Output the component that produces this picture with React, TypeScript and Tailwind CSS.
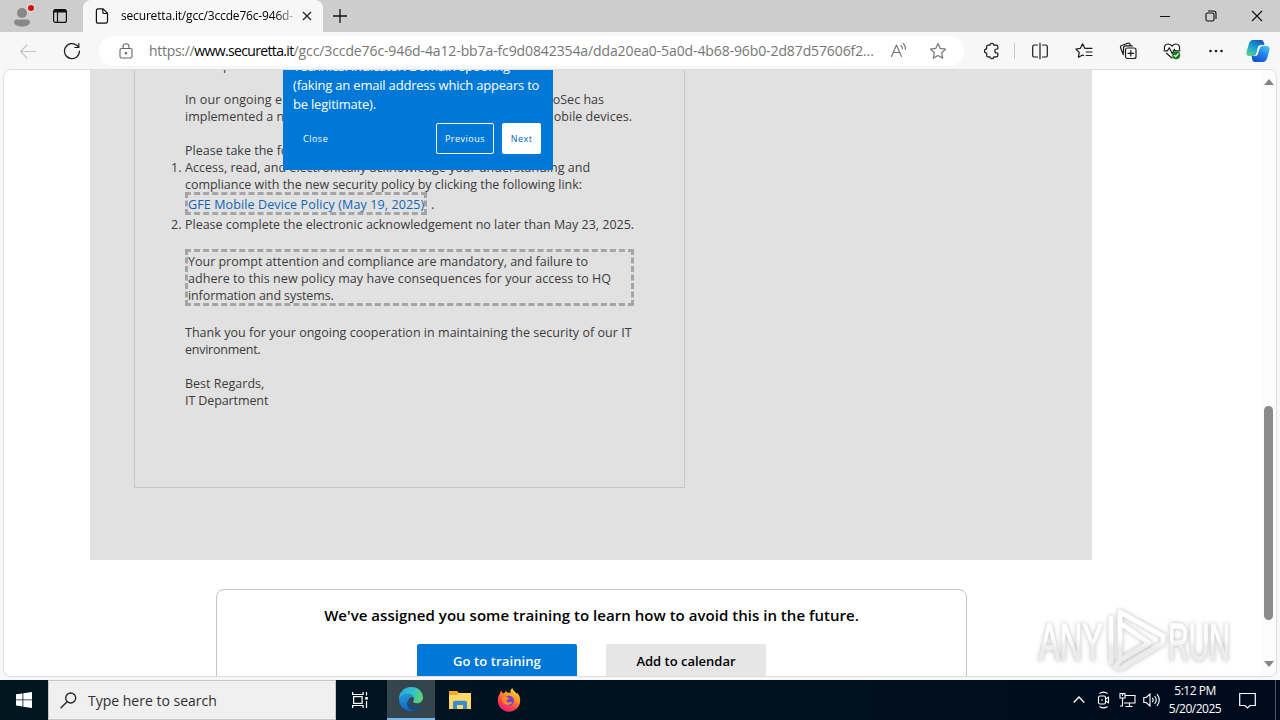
import type { ReactNode } from 'react';

function TabStrip() {
  return (
    <div className="flex h-8 w-full shrink-0 items-end bg-[#cdcdcd]">
      <div className="flex h-8 w-[83px] items-center rounded-br-lg">
        <svg className="ml-2.5 h-8 w-8" viewBox="0 0 32 32">
          <circle cx="12" cy="13" r="5" fill="#8a8886" />
          <path d="M4 22c0-2 2-2.5 4-2.5h8c2 0 4 .5 4 2.500 0 3-4 4.500-8 4.500s-8-1.500-8-4.500z" fill="#8a8886" />
          <circle cx="21" cy="8" r="4.200" fill="#e4dcdc" />
          <circle cx="21" cy="8" r="3" fill="#d40d12" />
        </svg>
        <svg className="ml-2.5 h-4 w-4" viewBox="0 0 16 16" fill="none" stroke="#111" strokeWidth="1.200">
          <rect x="1.600" y="1.600" width="12.800" height="12.800" rx="2" />
          <path d="M2 3.200h12" strokeWidth="2.600" />
          <path d="M5.500 4v10.500" />
        </svg>
      </div>
      <div className="flex h-8 w-[240px] items-center rounded-t-lg bg-[#f7f7f7]">
        <svg className="ml-3 h-4 w-[14px]" viewBox="0 0 14 16" fill="none" stroke="#111" strokeWidth="1.200">
          <path d="M3 .8h5l4.500 4.500v8.200c0 1-.6 1.700-1.600 1.700H3c-1 0-1.600-.7-1.600-1.700V2.500C1.400 1.500 2 .8 3 .8z" />
          <path d="M7.800 1v3.200c0 .8.500 1.300 1.300 1.300h3.300" />
        </svg>
        <span className="ml-[12px] w-[173px] whitespace-nowrap bg-gradient-to-r from-black from-[88%] to-[#c5c5c5] bg-clip-text text-[12px] tracking-[-0.17px] text-transparent">
          securetta.it/gcc/3ccde76c-946d-
        </span>
        <svg className="ml-[7px] h-3 w-3 shrink-0" viewBox="0 0 12 12" stroke="#222" strokeWidth="1.300">
          <path d="M2 2l8 8M10 2l-8 8" />
        </svg>
      </div>
      <div className="flex h-8 flex-1 items-center rounded-bl-lg">
        <svg className="ml-[9px] h-4 w-4" viewBox="0 0 16 16" stroke="#111" strokeWidth="1.300">
          <path d="M8 1v14M1 8h14" />
        </svg>
      </div>
      <div className="flex h-8 w-[138px] items-center justify-around text-[#111]">
        <svg className="h-3 w-3" viewBox="0 0 12 12" stroke="currentColor"><path d="M1 6.500h10" /></svg>
        <svg className="h-3 w-3" viewBox="0 0 12 12" fill="none" stroke="currentColor" strokeWidth="1.100">
          <rect x="1" y="3" width="8" height="8" rx="1.500" />
          <path d="M3 1h5.500C10 1 11 2 11 3.500V9" />
        </svg>
        <svg className="h-3 w-3" viewBox="0 0 12 12" stroke="currentColor" strokeWidth="1.100"><path d="M1 1l10 10M11 1L1 11" /></svg>
      </div>
    </div>
  );
}

function ToolIcon({ className, children }: { className?: string; children: ReactNode }) {
  return (
    <svg
      className={`h-[18px] w-[18px] shrink-0 ${className ?? ''}`}
      viewBox="0 0 18 18"
      fill="none"
      stroke="currentColor"
      strokeWidth="1.200"
      strokeLinecap="round"
      strokeLinejoin="round"
    >
      {children}
    </svg>
  );
}

const STAR = 'M9 1.500l2.300 4.900 5.300.7-3.900 3.700 1 5.300L9 13.500l-4.700 2.600 1-5.300L1.400 7.100l5.300-.7z';

function Toolbar() {
  return (
    <div className="flex h-[37px] w-full shrink-0 items-center bg-[#f7f7f7] text-[#1b1b1b]">
      <ToolIcon className="ml-[19px] text-[#c4c4c4]"><path d="M16.500 9.500h-15M8 3L1.500 9.500 8 16" /></ToolIcon>
      <ToolIcon className="ml-[26px]">
        <path d="M16.500 9A7.500 7.500 0 1 1 14 3.500L15.500 5" />
        <path d="M15.800 1.500V5.500h-4" />
      </ToolIcon>
      <div className="ml-[18px] flex h-[30px] w-[865px] items-center rounded-full bg-white">
        <svg className="ml-[20px] h-4 w-[14px] shrink-0" viewBox="0 0 14 16" fill="none" stroke="#666" strokeWidth="1.100">
          <rect x="1" y="5.500" width="12" height="9.500" rx="1.500" />
          <path d="M4 5.500V3.700a3 3 0 0 1 6 0v1.800" />
          <circle cx="7" cy="10.300" r=".7" fill="#666" />
        </svg>
        <span className="ml-[16px] w-[726px] whitespace-nowrap text-[14px] tracking-[-0.11px] text-[#767676]">
          <span className="tracking-[-0.3px]">https://</span><span className="tracking-[-0.65px] text-black">www.securetta.it</span>/gcc/3ccde76c-946d-4a12-bb7a-fc9d0842354a/dda20ea0-5a0d-4b68-96b0-2d87d57606f2...
        </span>
        <ToolIcon className="ml-[15px] text-[#777]">
          <path d="M1.500 14.500L6.500 3l5 11.500M3.300 10.500h6.400M11 3.500c1 .8 1.500 2 1.300 3.400M13 1.500c1.800 1.400 2.700 3.500 2.300 6" />
        </ToolIcon>
        <ToolIcon className="ml-[21px] text-[#777]"><path d={STAR} /></ToolIcon>
      </div>
      <ToolIcon className="ml-[19px]">
        <path d="M5 3.200h2a1.900 1.900 0 0 1 3.800 0h2.700c.8 0 1.300.5 1.300 1.300V7h-1a2 2 0 0 0 0 4h1v2.500c0 .8-.5 1.300-1.300 1.300h-2.700a1.900 1.900 0 0 1-3.800 0H5c-.8 0-1.300-.5-1.300-1.300V11.200a2.200 2.200 0 0 1 0-4.400V4.500c0-.8.5-1.300 1.300-1.300z" />
      </ToolIcon>
      <span className="ml-[13px] h-4 w-px bg-[#c8c8c8]" />
      <ToolIcon className="ml-[16px]">
        <path d="M6.500 3H3.300C2.400 3 1.700 3.700 1.700 4.600v8.800c0 .9.700 1.600 1.600 1.600h3.200M11.500 3h3.200c.9 0 1.600.7 1.600 1.600v8.800c0 .9-.7 1.600-1.600 1.600h-3.200M9 1.200v15.600" />
      </ToolIcon>
      <ToolIcon className="ml-[26px]">
        <path d="M10.500 6.300H9.800L7.600 1.800 5.400 6.300.9 7l3.300 3.300-.8 5 4.200-2.300 1 .5M10.500 6.300H17M11.200 10H17M11.200 13.500H17" />
      </ToolIcon>
      <ToolIcon className="ml-[26px]">
        <rect x="6.500" y="6" width="10.500" height="10.500" rx="2" />
        <path d="M11.800 8.500v5.500M9 11.300h5.500M4.300 12.700l-2.700-7c-.4-1 .1-1.900 1-2.200l6.200-2.300c.9-.3 1.800.1 2.100 1L11.300 3.500M4.500 11V6.200c0-1.500.8-2.400 2.300-2.400h6.500" />
      </ToolIcon>
      <ToolIcon className="ml-[26px]">
        <path d="M1.500 7.500C.6 4.500 2.500 2 5 2c1.800 0 3 .9 4 2.200C10 2.900 11.200 2 13 2c2.500 0 4.400 2.500 3.500 5.500M1 8.800h3.500l1.800-3 3 6 2-4.500 1 1.500H17M3.500 11.200L9 16" />
        <circle cx="13.200" cy="13.300" r="4" fill="#187c22" stroke="none" />
        <path d="M11.400 13.400l1.200 1.200 2.500-2.600" stroke="white" />
      </ToolIcon>
      <ToolIcon className="ml-[26px]">
        <g fill="currentColor" stroke="none"><circle cx="3.500" cy="9" r="1.300" /><circle cx="9" cy="9" r="1.300" /><circle cx="14.500" cy="9" r="1.300" /></g>
      </ToolIcon>
      <svg className="ml-[21px] h-6 w-6 shrink-0" viewBox="0 0 24 24">
        <defs>
          <linearGradient id="cpA" x1="0.700" y1="0" x2="0.200" y2="1"><stop stopColor="#1558c0" /><stop offset=".4" stopColor="#1398d6" /><stop offset="1" stopColor="#56cfa0" /></linearGradient>
          <linearGradient id="cpB" x1="0.900" y1="0" x2="0.300" y2="1"><stop stopColor="#4bc6f4" /><stop offset=".5" stopColor="#2182ec" /><stop offset="1" stopColor="#1951c9" /></linearGradient>
        </defs>
        <path d="M7 1h8c1.500 0 2.300.8 2.700 2l.9 3H15c-1.700 0-2.500 1-3 2.500L10.200 15c-.5 1.300-1.200 2-2.700 2H3.500C.7 17 0 15 .6 12.500L3 4.500C3.700 2.200 5 1 7 1z" fill="url(#cpA)" />
        <path d="M17 23H9c-1.500 0-2.300-.8-2.700-2L5.700 17H9c1.700 0 2.500-1 3-2.500L13.800 9c.5-1.300 1.200-2 2.700-2h4c2.800 0 3.500 2 2.900 4.500L21 19.500c-.7 2.300-2 3.500-4 3.500z" fill="url(#cpB)" />
        <path d="M12.500 7H16c-1.500 0-2.200 1-2.700 2.300L11.500 15c-.5 1.300-1 2-2.500 2H8c1.500 0 2-.7 2.500-2L12 8.500z" fill="white" />
      </svg>
    </div>
  );
}

function Line({ className, children }: { className?: string; children?: ReactNode }) {
  return <p className={`h-[17px] whitespace-nowrap leading-[17px] ${className ?? ''}`}>{children}</p>;
}

function Email() {
  return (
    <div className="h-[490px] w-[1002px] shrink-0 overflow-hidden bg-[#e1e1e1] pl-[44px]">
      <div className="-mt-[13px] h-[431px] w-[551px] border border-t-0 border-[#c6c6c6] pl-[50px] text-[12.500px] tracking-[0.01px] text-[#3c3c3c]">
        <div className="w-[449px]">
          <Line>All Corp Staff</Line>
          <Line />
          <div className="flex justify-between"><Line className="tracking-[0.12px]">In our ongoing e</Line><Line className="mr-[30px]">oSec has</Line></div>
          <div className="flex justify-between"><Line>implemented a n</Line><Line className="mr-[2px]">obile devices.</Line></div>
          <Line />
          <Line>Please take the fo</Line>
          <ol>
            <li className="flex">
              <span className="-ml-[14px] w-[14px] shrink-0 leading-[17px]">1.</span>
              <div>
                <Line className="tracking-[0.02px]">Access, read, and electronically acknowledge your understanding and</Line>
                <Line className="tracking-[-0.03px]">compliance with the new security policy by clicking the following link:</Line>
                <div className="-mt-px mb-px flex h-[23px] items-center">
                  <a className="flex h-[23px] w-[242px] items-center whitespace-nowrap border-[3px] border-dashed border-[#a5a5a5] pt-[3px] tracking-[0.12px] text-[#0b66b8]">GFE Mobile Device Policy (May 19, 2025)</a>
                  <span className="ml-1 pt-[3px]">.</span>
                </div>
              </div>
            </li>
            <li className="flex">
              <span className="-ml-[14px] w-[14px] shrink-0 leading-[17px]">2.</span>
              <Line className="tracking-[-0.01px]">Please complete the electronic acknowledgement no later than May 23, 2025.</Line>
            </li>
          </ol>
          <div className="mt-[16px] h-[57px] border-[3px] border-dashed border-[#a5a5a5]">
            <div className="pt-px">
              <Line className="tracking-[-0.01px]">Your prompt attention and compliance are mandatory, and failure to</Line>
              <Line className="tracking-[0.05px]">adhere to this new policy may have consequences for your access to HQ</Line>
              <Line className="tracking-[-0.1px]">information and systems.</Line>
            </div>
          </div>
          <div className="mt-[18px]">
            <Line className="tracking-[0.03px]">Thank you for your ongoing cooperation in maintaining the security of our IT</Line>
            <Line className="tracking-[-0.25px]">environment.</Line>
            <Line />
            <Line>Best Regards,</Line>
            <Line className="tracking-[-0.1px]">IT Department</Line>
          </div>
        </div>
      </div>
    </div>
  );
}

function Tip() {
  return (
    <div className="absolute left-[279px] top-0 h-[100px] w-[270px] overflow-hidden bg-[#0078d7] px-[10px] text-white">
      <div className="-mt-[13px] whitespace-nowrap text-[13px] leading-[19px] tracking-[-0.2px]">
        <p>Technical indicator: Domain spoofing</p>
        <p>(faking an email address which appears to</p>
        <p>be legitimate).</p>
      </div>
      <div className="mt-[9px] flex h-[31px] items-center text-[9px] tracking-[0.5px]">
        <button className="ml-[10px]">Close</button>
        <button className="ml-auto h-[31px] w-[58px] rounded-[2px] border border-white">Previous</button>
        <button className="ml-2 mr-[2px] h-[31px] w-[39px] rounded-[2px] bg-white text-[#0067b8]">Next</button>
      </div>
    </div>
  );
}

function Training() {
  return (
    <div className="ml-[126px] mt-[29px] h-[200px] w-[751px] shrink-0 rounded-t-lg border border-[#c4c4c4] pt-[14px] text-center font-semibold text-black">
      <h2 className="whitespace-nowrap text-[15px] leading-[22px] tracking-[0.03px]">We've assigned you some training to learn how to avoid this in the future.</h2>
      <div className="mt-[18px] flex justify-center gap-[29px] text-[13px]">
        <button className="h-[34px] w-[160px] rounded-[2px] bg-[#0078d7] pt-px tracking-[0.1px] text-white">Go to training</button>
        <button className="h-[34px] w-[160px] rounded-[2px] bg-[#e6e6e6] pt-px">Add to calendar</button>
      </div>
    </div>
  );
}

function Watermark() {
  return (
    <svg
      className="absolute left-[1029px] top-[534px] h-[72px] w-[210px] drop-shadow-[0_0_2px_#bbb]"
      viewBox="0 0 210 72"
      fill="none"
      strokeLinejoin="round"
      strokeLinecap="round"
    >
      <defs>
        <linearGradient id="wm" gradientUnits="userSpaceOnUse" x1="0" y1="34" x2="0" y2="44">
          <stop stopColor="#ffffff" />
          <stop offset="1" stopColor="#ececec" />
        </linearGradient>
      </defs>
      <g fill="url(#wm)" stroke="url(#wm)" strokeWidth="1.500" fontFamily="Liberation Sans Narrow, Liberation Sans, sans-serif" fontSize="51">
        <text x="6" y="56" textLength="64" lengthAdjust="spacingAndGlyphs">ANY</text>
        <text x="135" y="56" textLength="62" lengthAdjust="spacingAndGlyphs">RUN</text>
      </g>
      <g stroke="url(#wm)" strokeWidth="5">
        <path d="M87 19v37l29-17zM87 19V8l43 24" />
        <path d="M78 14v44M130 32v7L87 65l-5-2 5-7" />
      </g>
    </svg>
  );
}

function Page() {
  return (
    <div className="flex h-[611px] bg-[#f7f7f7] px-[3px] pb-[3px]">
      <main className="relative flex h-[608px] w-[1274px] overflow-hidden rounded-lg border border-[#dedede] bg-white">
        <div className="ml-[86px] flex w-[1002px] flex-col">
          <Email />
          <Training />
        </div>
        <div className="ml-auto flex w-[15px] flex-col items-center bg-[#fcfcfc]">
          <svg className="mt-[9px] h-[6px] w-[10px]" viewBox="0 0 10 6"><path d="M5 0l5 6H0z" fill="#858585" /></svg>
          <div className="mt-[321px] h-[214px] w-[9px] rounded-full bg-[#8a8a8a]" />
          <svg className="mt-[41px] h-[6px] w-[10px]" viewBox="0 0 10 6"><path d="M0 0h10L5 6z" fill="#858585" /></svg>
        </div>
        <Tip />
        <Watermark />
      </main>
    </div>
  );
}

function EdgeLogo() {
  return (
    <svg className="h-6 w-6" viewBox="0 0 24 24">
      <defs>
        <linearGradient id="edA" x1="0" y1="0.300" x2="1" y2="0.500"><stop stopColor="#28a9e5" /><stop offset=".55" stopColor="#2fc2c8" /><stop offset="1" stopColor="#61d16a" /></linearGradient>
        <linearGradient id="edB" x1="0.300" y1="0" x2="0.500" y2="1"><stop stopColor="#2497df" /><stop offset="1" stopColor="#1261b6" /></linearGradient>
      </defs>
      <path d="M0 12C0 5 5 0 12 0c7.500 0 12 5 12 10.500 0 3.500-2.700 5.800-6 5.800-2.500 0-4-.8-4-1.700 0-.6 1-1 1-2.700C15 9.500 12.500 7 9 7c-4 0-7 2-9 5z" fill="url(#edA)" />
      <path d="M0 12c2-3.500 5-5 8.500-5 3.700 0 6.500 2.200 6.500 5-1-1.500-2.500-2-3.500-1.500C8 12 7.500 21 16.500 20.500c2.500-.1 4.500-1.300 5.700-2C20 22 16.300 24 12 24 5 24 0 18.700 0 12z" fill="url(#edB)" />
      <path d="M8.300 13.500C7 18 9.700 23 14.500 23.800c3.200-.5 6-2.300 7.700-5.300-5.500 3-13.500 1.500-13.900-5z" fill="#114a8b" />
    </svg>
  );
}

function Firefox() {
  return (
    <svg className="h-6 w-6" viewBox="0 0 24 24">
      <defs>
        <linearGradient id="ffA" x1="0.800" y1="0" x2="0.250" y2="1"><stop stopColor="#ffe344" /><stop offset=".35" stopColor="#ff9a22" /><stop offset=".7" stopColor="#ff3f4c" /><stop offset="1" stopColor="#ed1d83" /></linearGradient>
      </defs>
      <path d="M3 5.500L4 2.500l2 3L8 4.500l1-2 1 2c2 0 3 .5 3.500.7C13 3 14 1 15.500.3c.5 2.500 3 3.500 4.300 5.500l.7-.8c2 2.500 2.700 5 2.700 7.500C23.200 19 18 23.700 12 23.700S.8 19 .8 12.500C.8 9.700 1.500 7.500 3 5.500z" fill="url(#ffA)" />
      <circle cx="12" cy="12.700" r="5" fill="#7542cf" />
      <path d="M5.500 9.500c1.500-1.500 3.500-1.500 5 0l2 .4c-.6 1.500-2.500 1.400-3 2.400-.4 1 .5 2 2 2.200 1.700.2 2.600-1 4-.4-1.300 2.400-4 3.400-6.500 2.400C6 15.400 4.500 12 5.500 9.500z" fill="#ff8b26" />
    </svg>
  );
}

function Taskbar() {
  return (
    <footer className="flex h-10 w-full shrink-0 items-center bg-gradient-to-r from-[#001720] to-[#000b1d] text-white">
      <div className="flex w-12 justify-center">
        <svg className="h-4 w-4" viewBox="0 0 16 16" fill="white"><path d="M0 2.300l6.500-.9v6.100H0zM7.300 1.300L16 0v7.500H7.300zM0 8.300h6.500v6.200L0 13.600zM7.300 8.300H16V16l-8.700-1.300z" /></svg>
      </div>
      <div className="flex h-10 w-[288px] items-center border border-[#c6c6c6] bg-[#f0f0f0] text-[#2f2f2f]">
        <svg className="ml-[11px] h-[17px] w-[17px]" viewBox="0 0 17 17" fill="none" stroke="#222" strokeWidth="1.300">
          <circle cx="10.700" cy="6" r="5" /><path d="M7 9.700L.6 16.200" />
        </svg>
        <span className="ml-[11px] whitespace-nowrap text-[14px]">Type here to search</span>
      </div>
      <div className="flex w-[51px] justify-center">
        <svg className="-ml-[3px] h-4 w-4" viewBox="0 0 16 16" fill="none" stroke="white" strokeWidth="1.200">
          <path d="M.6 0v2.500h10.500V0M.6 16v-2.500h10.500V16M14.500 0v3.500M14.500 9v7" /><rect x="1.600" y="4.600" width="8.500" height="6.800" /><rect x="13.200" y="5" width="2.600" height="2.600" fill="white" stroke="none" />
        </svg>
      </div>
      <div className="flex h-10 w-12 items-center justify-center border-b-2 border-[#76b9ed] bg-[#35454d]"><EdgeLogo /></div>
      <div className="flex w-[50px] justify-center">
        <svg className="h-5 w-[22px]" viewBox="0 0 22 20">
          <path d="M0 1h8l2 2h12v16H0z" fill="#efad28" /><path d="M0 5h8l2-2h12v16H0z" fill="#ffd968" />
          <path d="M4 19v-6.500c0-1 .7-1.700 1.700-1.700h10.600c1 0 1.700.7 1.700 1.700V19h-4v-4H8v4z" fill="#398dce" />
        </svg>
      </div>
      <div className="flex w-12 justify-center"><Firefox /></div>
      <div className="ml-auto flex h-10 items-center">
        <svg className="h-3 w-3" viewBox="0 0 12 12" fill="none" stroke="white" strokeWidth="1.300"><path d="M.7 8.500L6 3l5.300 5.500" /></svg>
        <svg className="ml-[12px] h-[18px] w-[14px]" viewBox="0 0 14 18" fill="none" stroke="white" strokeWidth="1.100">
          <rect x="1.500" y="5" width="7" height="8" rx="1.500" /><path d="M8.500 8l3-1.700v5.400l-3-1.700M2.500 2.500Q6.500-.3 10.500 2.500M2.500 15.500q4 2.800 8 0" /><path d="M4 9h2" />
        </svg>
        <svg className="ml-[8px] h-4 w-[17px]" viewBox="0 0 17 16" fill="none" stroke="white" strokeWidth="1.100">
          <path d="M6 3.500h10v7.500H5M10.500 11v3.500M6.500 14.500h7M3.500 6v8M1 14h3" /><path d="M1 1.500h5V6H1zM3.500 1.500V4" />
        </svg>
        <svg className="ml-[7px] h-4 w-[17px]" viewBox="0 0 17 16" fill="none" stroke="white" strokeWidth="1.100">
          <path d="M.8 5.500h2.400L7 2v12L3.200 10.500H.8zM9.300 5.800c1 1.300 1 3.100 0 4.400M11.600 4c2 2.400 2 5.600 0 8M13.900 2.200c3 3.600 3 8 0 11.600" />
        </svg>
        <div className="ml-[6px] w-[58px] whitespace-nowrap text-center text-[12px] leading-[18px] tracking-[-0.5px]">
          <div>5:12 PM</div><div>5/20/2025</div>
        </div>
        <svg className="ml-[15px] mr-[19px] h-[17px] w-[17px]" viewBox="0 0 17 17" fill="none" stroke="white" strokeWidth="1.200"><path d="M.7 1.500h15.600v12H11l-2.500 2.500L6 13.500H.7z" /></svg>
        <span className="mr-[4px] h-10 w-px bg-[#4a5566]" />
      </div>
    </footer>
  );
}

export default function App() {
  return (
    <div className="flex h-[720px] w-[1280px] flex-col overflow-hidden bg-[#f7f7f7] font-['Open_Sans','Noto_Sans',sans-serif]">
      <TabStrip />
      <Toolbar />
      <Page />
      <Taskbar />
    </div>
  );
}
